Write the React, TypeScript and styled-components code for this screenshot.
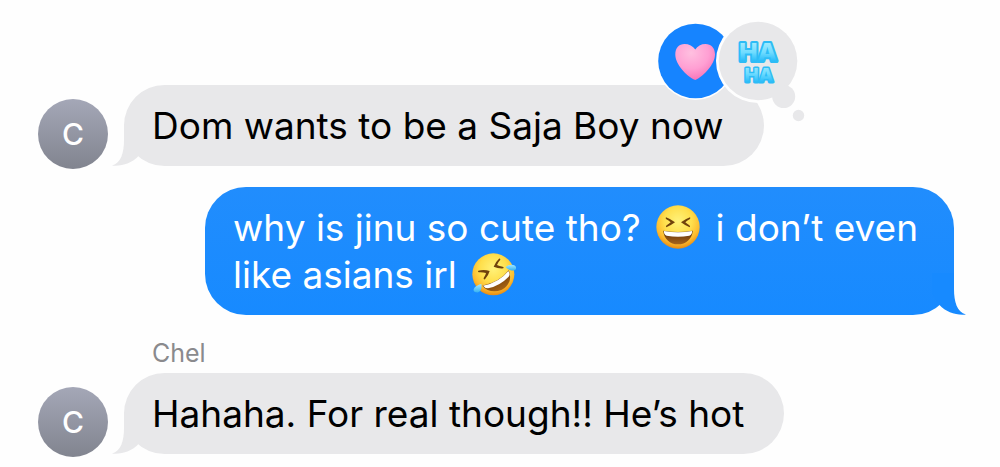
import React from "react";
import styled, { createGlobalStyle } from "styled-components";

const GREY = "#e8e8ea";

const GlobalStyle = createGlobalStyle`
  * { box-sizing: border-box; }
  body {
    margin: 0;
    background: #fefefe;
    font-family: Inter, "Liberation Sans", sans-serif;
  }
`;

const Thread = styled.ol`
  list-style: none;
  margin: 0;
  padding: 85px 46px 12px 38px;
`;

const Row = styled.li<{ $sent?: boolean }>`
  display: flex;
  align-items: flex-end;
  justify-content: ${(p) => (p.$sent ? "flex-end" : "flex-start")};
  gap: 16px;
`;

const Avatar = styled.div`
  flex: none;
  width: 70px;
  height: 70px;
  margin-bottom: -3px;
  border-radius: 50%;
  background: linear-gradient(#a4a7b7, #81848f);
  color: #fff;
  font-size: 30px;
  font-weight: 500;
  line-height: 71px;
  text-align: center;
`;

const Bubble = styled.div<{ $sent?: boolean }>`
  position: relative;
  max-width: 760px;
  padding: 17px 28px;
  padding-right: ${(p) => (p.$sent ? 36 : 40)}px;
  margin-bottom: ${(p) => (p.$sent ? 21 : 0)}px;
  border-radius: 41px;
  background: ${(p) => (p.$sent ? "linear-gradient(#218dfd, #178aff)" : GREY)};
  color: ${(p) => (p.$sent ? "#fff" : "#000")};
  font-size: 37px;
  line-height: 47px;
`;

const ReceivedRow = styled(Row)`
  margin-bottom: 21px;
`;

const Message = styled.p`
  margin: 0;
`;

const TailSvg = styled.svg<{ $sent?: boolean }>`
  position: absolute;
  bottom: 0;
  ${(p) => (p.$sent ? "right: -12px; transform: scaleX(-1);" : "left: -12px;")}
`;

const Sender = styled.div`
  margin: 0 0 3px 114px;
  color: #8a8a8d;
  font-size: 25px;
  line-height: 34px;
`;

const EmojiSvg = styled.svg`
  width: 44px;
  height: 44px;
  margin: -4px 5px;
  vertical-align: -4px;
`;

const ReactionSvg = styled.svg`
  position: absolute;
  top: -67px;
  right: -43px;
`;

const Tail = ({ sent }: { sent?: boolean }) => (
  <TailSvg $sent={sent} width="34" height="42" viewBox="0 0 34 42" aria-hidden="true">
    <path
      d="M12 0V16C12 29 9 39 0 41.500C10 42.500 20 39 26.500 32L34 20V0Z"
      fill={sent ? "#178aff" : GREY}
    />
  </TailSvg>
);

const FaceGradient = ({ id }: { id: string }) => (
  <radialGradient id={id} cx="0.5" cy="0.36" r="0.64">
    <stop offset="0" stopColor="#fff27a" />
    <stop offset="0.5" stopColor="#ffdf4c" />
    <stop offset="0.8" stopColor="#fdbb2e" />
    <stop offset="1" stopColor="#e88a12" />
  </radialGradient>
);

const Laughing = () => (
  <EmojiSvg viewBox="24 16 132 132" role="img" aria-label="laughing face">
    <defs>
      <FaceGradient id="face-a" />
      <linearGradient id="mouth-a" x1="0" y1="0" x2="0" y2="1">
        <stop offset="0" stopColor="#5b2f0c" />
        <stop offset="1" stopColor="#a9651a" />
      </linearGradient>
    </defs>
    <circle cx="90" cy="82" r="65" fill="url(#face-a)" />
    <path d="M54 53Q68 58 81 68Q68 78 55 83Q52 80 56 77Q63 73 68 68Q62 62 54 58Q52 55 54 53Z" fill="#70420c" />
    <path d="M126 53Q112 58 99 68Q112 78 125 83Q128 80 124 77Q117 73 112 68Q118 62 126 58Q128 55 126 53Z" fill="#70420c" />
    <path d="M46 93Q90 101 134 93C133 117 114 134 90 134S47 117 46 93Z" fill="url(#mouth-a)" />
    <path d="M48 94Q90 102 132 94Q133 105 124 108Q90 114 56 108Q47 105 48 94Z" fill="#fff" />
  </EmojiSvg>
);

const Rolling = () => (
  <EmojiSvg viewBox="18 12 132 132" role="img" aria-label="rolling on the floor laughing">
    <defs>
      <FaceGradient id="face-b" />
      <linearGradient id="mouth-b" x1="0" y1="0" x2="0.7" y2="1">
        <stop offset="0.3" stopColor="#653409" />
        <stop offset="1" stopColor="#aa6716" />
      </linearGradient>
      <linearGradient id="tear" x1="0" y1="0" x2="0" y2="1">
        <stop offset="0" stopColor="#a5e9ff" />
        <stop offset="1" stopColor="#35b2f2" />
      </linearGradient>
    </defs>
    <circle cx="82" cy="79" r="63" fill="url(#face-b)" />
    <path d="M37 68Q55 64 71 69Q67 83 57 94Q52 95 53 90Q59 82 60 75Q49 72 38 73Q34 70 37 68Z" fill="#70420c" />
    <path d="M99 32Q88 42 83 56Q96 62 112 61Q115 57 110 56Q100 55 93 51Q96 42 103 35Q103 31 99 32Z" fill="#70420c" />
    <path d="M49 113Q99 104 128 67C139 92 128 116 106 126C84 134 62 129 49 113Z" fill="url(#mouth-b)" />
    <path d="M51 113Q99 104 127 69Q134 79 128 86Q102 113 66 121Q57 121 51 113Z" fill="#fff" />
    <path d="M119 58C128 48 145 47 150 57C153 69 136 73 119 58Z" fill="url(#tear)" />
    <path d="M46 108C49 122 42 135 30 133C17 130 21 115 46 108Z" fill="url(#tear)" />
  </EmojiSvg>
);

const Reactions = () => (
  <ReactionSvg width="152" height="110" viewBox="655 18 152 110" role="img" aria-label="Reactions: heart, ha ha">
    <defs>
      <radialGradient id="heart" cx="0.4" cy="0.25" r="0.8">
        <stop offset="0" stopColor="#ffc0e0" />
        <stop offset="0.55" stopColor="#ff9fd3" />
        <stop offset="1" stopColor="#f66fb4" />
      </radialGradient>
      <linearGradient id="haha" gradientUnits="userSpaceOnUse" x1="0" y1="42" x2="0" y2="63" spreadMethod="repeat">
        <stop offset="0" stopColor="#a4ebff" />
        <stop offset="0.5" stopColor="#6fdcff" />
        <stop offset="1" stopColor="#18b4f8" />
      </linearGradient>
    </defs>
    <circle cx="695.500" cy="61" r="39" fill="#fefefe" />
    <circle cx="695.500" cy="61" r="37.300" fill="#1684ff" />
    <path
      d="M695.300 80C686 76 675.300 64 675.300 54.500C675.300 48 679 44 684.500 44C689 44 693 46 695.300 49.500C697.500 46 701 44 705.500 44C711 44 715 48 715 54.500C715 64 704 76 695.300 80Z"
      fill="url(#heart)"
    />
    <circle cx="758" cy="61" r="42" fill="#fefefe" />
    <circle cx="758" cy="61" r="39.300" fill={GREY} />
    <circle cx="783.700" cy="96.500" r="11.500" fill={GREY} />
    <circle cx="798.500" cy="115.500" r="5.700" fill={GREY} />
    <text
      fontFamily="Inter, sans-serif"
      fontWeight="800"
      textAnchor="middle"
      fill="url(#haha)"
      stroke="#2dbcf6"
      strokeWidth="4"
      strokeLinejoin="round"
      paintOrder="stroke"
    >
      <tspan x="758" y="61" fontSize="25">HA</tspan>
      <tspan x="759" y="82" fontSize="19" strokeWidth="3">HA</tspan>
    </text>
  </ReactionSvg>
);

export default function App() {
  return (
    <>
      <GlobalStyle />
      <main>
        <Thread>
          <ReceivedRow>
            <Avatar>C</Avatar>
            <Bubble>
              <Tail />
              <Message>Dom wants to be a Saja Boy now</Message>
              <Reactions />
            </Bubble>
          </ReceivedRow>
          <Row $sent>
            <Bubble $sent>
              <Tail sent />
              <Message>
                why is jinu so cute tho? <Laughing /> i don’t even
                <br />
                like asians irl <Rolling />
              </Message>
            </Bubble>
          </Row>
          <li>
            <Sender>Chel</Sender>
            <Row as="div">
              <Avatar>C</Avatar>
              <Bubble>
                <Tail />
                <Message>Hahaha. For real though!! He’s hot</Message>
              </Bubble>
            </Row>
          </li>
        </Thread>
      </main>
    </>
  );
}
